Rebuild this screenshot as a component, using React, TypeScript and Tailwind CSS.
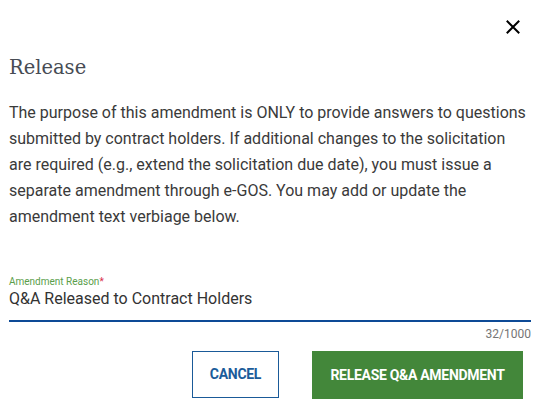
export default function App() {
  return (
    <div className="w-[540px] h-[411px] bg-white overflow-hidden font-['Roboto',sans-serif]">
      <div className="flex justify-end pt-[20px] pr-[20px]">
        <button className="w-[14px] h-[14px] text-black" aria-label="Close">
          <svg viewBox="0 0 14 14" width="14" height="14" stroke="currentColor" strokeWidth="2" strokeLinecap="square">
            <path d="M1.5 1.5 L12.5 12.5 M12.5 1.5 L1.5 12.5" />
          </svg>
        </button>
      </div>
      <div className="px-[9px]">
        <h2 className="mt-[20px] h-[28px] leading-[28px] text-[19.5px] text-[#474c54] font-['DejaVu_Serif',serif]">
          Release
        </h2>
        <p className="mt-[18px] text-[16px] leading-[26px] text-[#3a3a3a]">
          The purpose of this amendment is ONLY to provide answers to questions submitted by contract holders. If
          additional changes to the solicitation are required (e.g., extend the solicitation due date), you must issue a
          separate amendment through e-GOS. You may add or update the amendment text verbiage below.
        </p>
        <div className="mt-[46px] text-[10px] leading-[12px] text-[#5a9e4b]">
          Amendment Reason<span className="text-[#d9304a]">*</span>
        </div>
        <div className="mt-[1px] pb-[11px] border-b-2 border-[#0d4a96] text-[16px] leading-[20px] text-[#333333]">
          Q&amp;A Released to Contract Holders
        </div>
        <div className="mt-[5px] text-right text-[12px] leading-[14px] text-[#757575]">32/1000</div>
        <div className="mt-[10px] flex justify-end gap-[33px] pr-[8px]">
          <button className="h-[47px] w-[87px] border border-[#1a5a98] text-[#1b5c9a] text-[14px] font-bold tracking-[-0.3px]">
            CANCEL
          </button>
          <button className="h-[48px] w-[211px] bg-[#43873a] text-white text-[14px] font-bold tracking-[-0.3px]">
            RELEASE Q&amp;A AMENDMENT
          </button>
        </div>
      </div>
    </div>
  )
}
